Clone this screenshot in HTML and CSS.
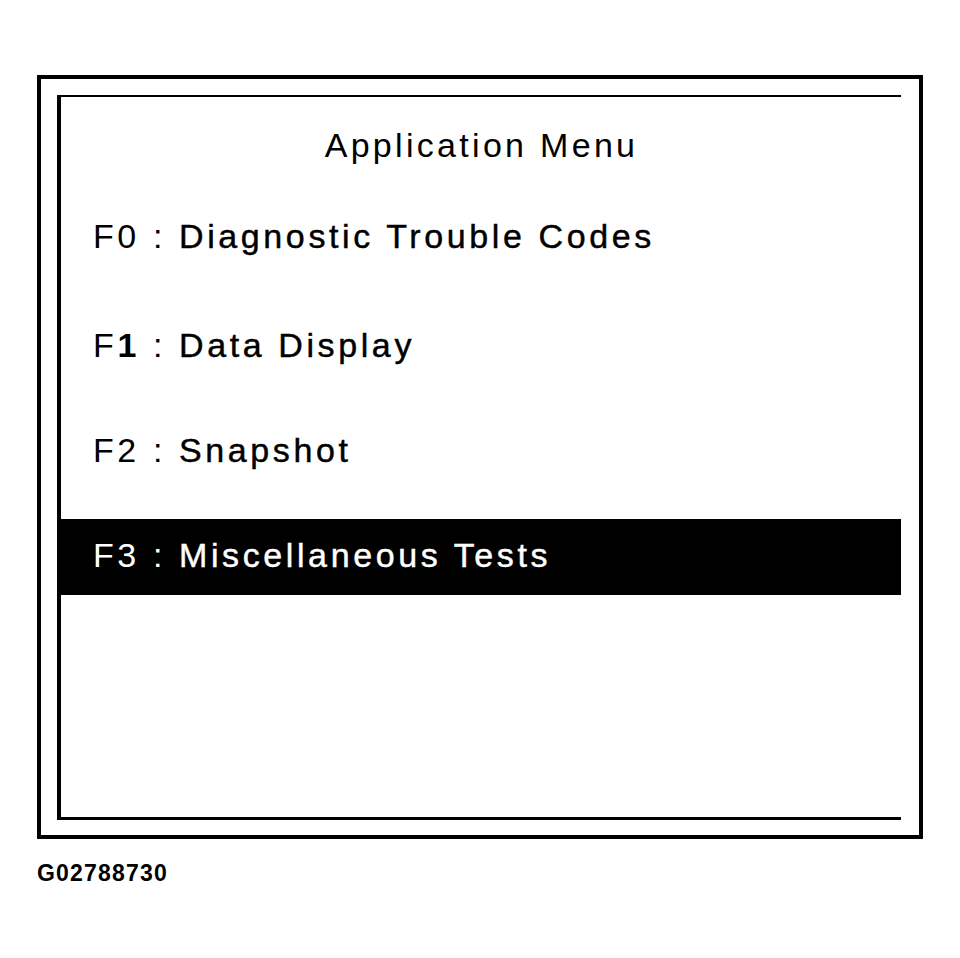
FILE: index.html
```html
<!DOCTYPE html>
<html>
<head>
<meta charset="utf-8">
<title>Application Menu</title>
<link rel="stylesheet" href="styles.css">
</head>
<body>
<div class="frame">
  <div class="screen">
    <div class="title">Application Menu</div>
    <div class="menu">
      <div class="item item-first"><span class="key">F0 :</span> <span class="label">Diagnostic Trouble Codes</span></div>
      <div class="item"><span class="key">F<b class="bold">1</b> :</span> <span class="label">Data Display</span></div>
      <div class="item"><span class="key">F2 :</span> <span class="label">Snapshot</span></div>
      <div class="item item-selected"><span class="key">F3 :</span> <span class="label">Miscellaneous Tests</span></div>
    </div>
  </div>
</div>
<div class="caption">G02788730</div>
</body>
</html>
```

FILE: styles.css
```css
html, body {
  margin: 0;
  padding: 0;
  background: #ffffff;
}

body {
  font-family: "Liberation Sans", Arial, sans-serif;
  color: #000000;
}

.frame {
  box-sizing: border-box;
  width: 886px;
  height: 764px;
  margin: 75px 0 0 37px;
  border: 4px solid #000000;
  padding: 16px 18px 15px 16px;
}

.screen {
  box-sizing: border-box;
  width: 844px;
  height: 725px;
  border-left: 4px solid #000000;
  border-top: 2px solid #000000;
  border-bottom: 3px solid #000000;
  display: flex;
  flex-direction: column;
}

.title {
  margin-top: 28px;
  height: 40px;
  line-height: 40px;
  font-size: 34px;
  letter-spacing: 3.3px;
  text-align: center;
  padding-left: 1px;
}

.menu {
  margin-top: 35px;
  display: flex;
  flex-direction: column;
  gap: 29px;
}

.item {
  box-sizing: border-box;
  height: 76px;
  line-height: 72px;
  padding: 0 0 4px 32px;
  font-size: 34px;
  letter-spacing: 3.6px;
  white-space: nowrap;
}

.item-first {
  margin-bottom: 4px;
}

.item-selected {
  background: #000000;
  color: #ffffff;
}

.label {
  -webkit-text-stroke: 0.45px currentColor;
}

.bold {
  font-weight: bold;
}

.caption {
  margin: 21px 0 0 37px;
  font-size: 23px;
  font-weight: bold;
  letter-spacing: 1.2px;
  line-height: 27px;
}
```
